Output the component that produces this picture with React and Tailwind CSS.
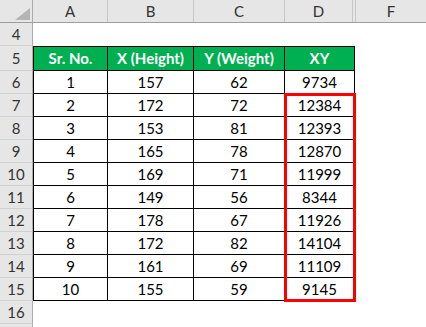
import React from "react";

const rows = [
  [1, 157, 62, 9734],
  [2, 172, 72, 12384],
  [3, 153, 81, 12393],
  [4, 165, 78, 12870],
  [5, 169, 71, 11999],
  [6, 149, 56, 8344],
  [7, 178, 67, 11926],
  [8, 172, 82, 14104],
  [9, 161, 69, 11109],
  [10, 155, 59, 9145],
];

const font = { fontFamily: "Lato, 'Open Sans', sans-serif" };

function RowHead({ n, h = "h-[23px]" }) {
  return (
    <div className={`w-[33px] ${h} shrink-0 bg-[#e6e6e6] border-r border-b border-r-[#ababab] border-b-[#d0d0d0] flex items-center justify-center text-[15px] text-[#333]`}>
      {n}
    </div>
  );
}

export default function App() {
  return (
    <div className="w-[426px] h-[327px] bg-white overflow-hidden text-black" style={font}>
      {/* column letters */}
      <div className="flex h-[23px] bg-[#e6e6e6] border-b border-[#9e9e9e] text-[15px] text-[#333]">
        <div className="w-[33px] shrink-0 border-r border-[#ababab] relative">
          <div className="absolute left-[15px] top-[8px] w-0 h-0 border-l-[15px] border-l-transparent border-b-[12px] border-b-[#b4b4b4]" />
        </div>
        <div className="w-[75px] border-r border-[#c8c8c8] flex items-center justify-center">A</div>
        <div className="w-[86px] border-r border-[#c8c8c8] flex items-center justify-center">B</div>
        <div className="w-[91px] border-r border-[#c8c8c8] flex items-center justify-center">C</div>
        <div className="w-[68px] border-r border-[#c8c8c8] flex items-center justify-center">D</div>
        <div className="w-[3px] border-r border-[#c8c8c8]" />
        <div className="flex-1 flex items-center justify-center">F</div>
      </div>

      <div className="flex">
        <RowHead n={4} />
        <div className="flex-1" />
      </div>

      <div className="relative">
        <div className="flex">
          <div className="flex flex-col">
            <RowHead n={5} h="h-[25px]" />
            {rows.map((_, i) => (
              <RowHead key={i} n={i + 6} />
            ))}
            <RowHead n={16} />
            <div className="w-[33px] h-[6px] bg-[#e6e6e6] border-r border-[#ababab]" />
          </div>

          <div className="flex flex-col">
            <div className="flex h-[25px] bg-[#00b050] text-white font-bold text-[15px] border border-black">
              <div className="w-[74px] border-r border-black flex items-center justify-center">Sr. No.</div>
              <div className="w-[86px] border-r border-black flex items-center justify-center">X (Height)</div>
              <div className="w-[91px] border-r border-black flex items-center justify-center">Y (Weight)</div>
              <div className="w-[69px] flex items-center justify-center">XY</div>
            </div>
            {rows.map((r, i) => (
              <div key={i} className="flex h-[23px] text-[15px] border-x border-b border-black">
                <div className="w-[74px] border-r border-black flex items-center justify-center">{r[0]}</div>
                <div className="w-[86px] border-r border-black flex items-center justify-center">{r[1]}</div>
                <div className="w-[91px] border-r border-black flex items-center justify-center">{r[2]}</div>
                <div className="w-[69px] flex items-center justify-center">{r[3]}</div>
              </div>
            ))}
          </div>
        </div>
        <div className="absolute left-[284px] top-[47px] w-[72px] h-[209px] border-[3px] border-[#ff0000]" />
      </div>
    </div>
  );
}
